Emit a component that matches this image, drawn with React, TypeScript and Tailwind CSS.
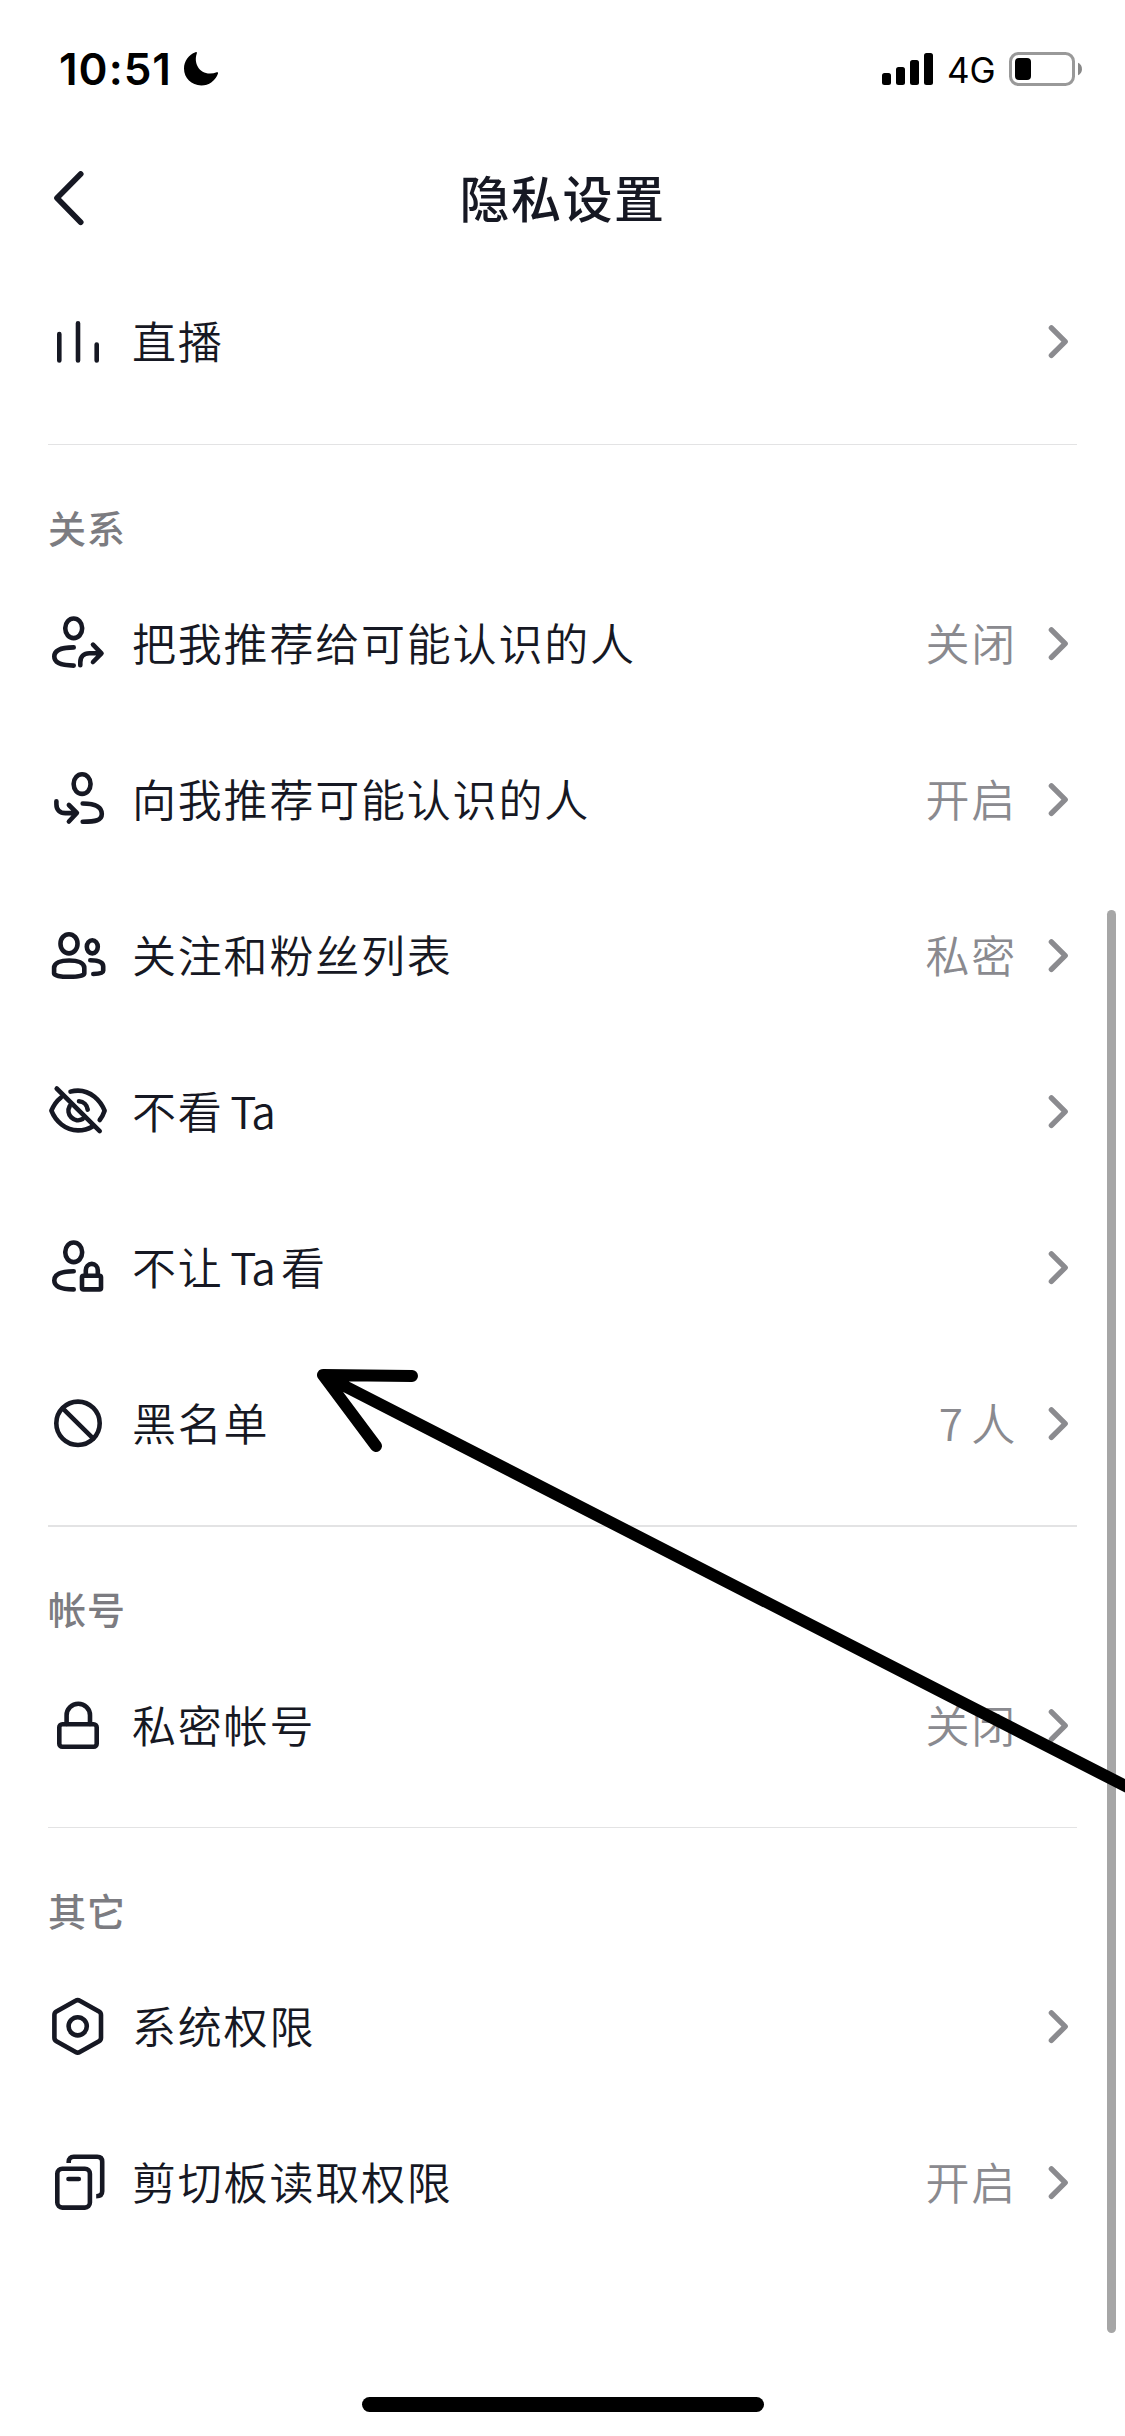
import type { ReactNode } from "react";

type Item = {
  label: ReactNode;
  icon: ReactNode;
  value?: string;
};

type Section = {
  title?: string;
  headClass?: string;
  lineClass?: string;
  items: Item[];
};

const icons = {
  live: <path d="M11.3 22v26.5M30 11.3v37.2M48.7 32.6v15.9" />,
  shareOut: (
    <>
      <rect x="17.3" y="4.5" width="16.8" height="19.6" rx="8.4" ry="9.3" />
      <path d="M25.7 33.4C14 33.4 6.3 36 6.3 42.6s7.7 9 19.4 9" />
      <path d="M32.3 51.3v-3c0-5.5 3.5-9 9-9H53M45 30.6l8.5 8.7-8.5 8.7" />
    </>
  ),
  shareIn: (
    <>
      <rect x="25.7" y="4.3" width="16.8" height="19.6" rx="8.4" ry="9.3" />
      <path d="M34.7 33.5C46.5 33.5 53.8 36.5 53.8 44c0 6.5-6 7.5-19.1 7.7" />
      <path d="M8.4 31.2v3c0 5.6 3.4 8.9 9 8.9h11M20.9 35l8 8-8 8.5" />
    </>
  ),
  people: (
    <>
      <rect x="12.5" y="8.2" width="17" height="19.2" rx="8.5" ry="9.3" />
      <path d="M6.1 42c0-5 6.4-7.5 15.1-7.5S36.3 37 36.3 42v5.5c0 2-5.8 3.3-15.1 3.3S6.1 49.5 6.1 47.5z" />
      <ellipse cx="44.3" cy="20.8" rx="5.5" ry="6.6" />
      <path d="M42.3 34.3c8 0 12.9 1.8 12.9 6.2v4.3c0 2.2-3 3.1-9.9 3.2" />
    </>
  ),
  eyeOff: (
    <>
      <path d="M22.5 9.6C25 8.9 27.4 8.6 30 8.6c12.6 0 22.5 9.6 26.6 20.1-1.1 3.3-2.6 6.4-4.9 9.3" />
      <path d="M13 15.5C8.6 19 5.5 23.6 3.4 28.7 7.5 39.2 17.4 48.4 30 48.4c5.6 0 10.4-1.5 14.6-4" />
      <path d="M21.7 24.2a9.5 9.5 0 0 0 12.9 12.9M31 19.3a9.5 9.5 0 0 1 8.7 8.3" />
      <path d="M8.7 6.5l43 42.6" />
    </>
  ),
  userLock: (
    <>
      <rect x="17.3" y="4.5" width="16.8" height="19.6" rx="8.4" ry="9.3" />
      <path d="M25.7 33.3C14 33.3 6.3 36 6.3 42.5s7.7 8.9 19.4 8.9" />
      <rect x="34" y="37.8" width="19" height="13.6" rx="1.5" />
      <path d="M37.8 37.5v-5.3a6 6.3 0 0 1 12 0v5.3" />
    </>
  ),
  ban: (
    <>
      <circle cx="30" cy="29.3" r="21.7" />
      <path d="M14.7 14.3l30.6 30.4" />
    </>
  ),
  lock: (
    <>
      <rect x="11.3" y="28.3" width="37.4" height="22.4" rx="3" />
      <path d="M18.6 28v-8.7a11.7 11.5 0 0 1 23.4 0V28" />
    </>
  ),
  hexagon: (
    <>
      <path d="M27.6 3.7a4 4 0 0 1 4.2 0l19.2 10.9a4 4 0 0 1 2 3.5v22.6a4 4 0 0 1-2 3.5L31.8 55a4 4 0 0 1-4.2 0L8.4 44.2a4 4 0 0 1-2-3.5V18.1a4 4 0 0 1 2-3.5z" />
      <circle cx="29.7" cy="29.3" r="9.1" />
    </>
  ),
  clipboard: (
    <>
      <rect x="9.3" y="15.7" width="32.6" height="38.9" rx="5" />
      <path d="M20.5 26h10.3" />
      <path strokeLinecap="butt" d="M20.7 9.9v-1.1c0-3.3 1.8-5 5-5h23.5c3.4 0 5 1.7 5 5v29.5c0 3.4-1.9 5-6 5" />
    </>
  ),
};

const Ta = () => <span className="tracking-[-1.5px]">Ta</span>;

const sections: Section[] = [
  { items: [{ label: "直播", icon: icons.live }] },
  {
    title: "关系",
    headClass: "h-[146px] pt-6",
    lineClass: "h-px",
    items: [
      { label: "把我推荐给可能认识的人", icon: icons.shareOut, value: "关闭" },
      { label: "向我推荐可能认识的人", icon: icons.shareIn, value: "开启" },
      { label: "关注和粉丝列表", icon: icons.people, value: "私密" },
      { label: <>不看 <Ta /></>, icon: icons.eyeOff },
      { label: <>不让 <Ta /> 看</>, icon: icons.userLock },
      { label: "黑名单", icon: icons.ban, value: "7 人" },
    ],
  },
  {
    title: "帐号",
    headClass: "h-[146px] pt-[23px]",
    lineClass: "h-[2px] -mb-px",
    items: [{ label: "私密帐号", icon: icons.lock, value: "关闭" }],
  },
  {
    title: "其它",
    headClass: "h-[145px] pt-[23px]",
    lineClass: "h-px",
    items: [
      { label: "系统权限", icon: icons.hexagon },
      { label: "剪切板读取权限", icon: icons.clipboard, value: "开启" },
    ],
  },
];

const StatusBar = () => (
  <div className="flex h-[138px] items-center justify-between pl-[59px] pr-[42px] font-['Inter',sans-serif] text-black">
    <div className="flex items-center">
      <span className="w-[124px] text-[44px] font-semibold leading-none tracking-[1px]">10:51</span>
      <svg width="36" height="36" viewBox="0 0 36 36" fill="currentColor">
        <path d="M12.5 1.2c1-.4 1.7.2 1.3 1.3C10.5 12 16 22.5 27 22.5c2.5 0 4.7-.4 6.700-1.200 1-.4 1.700.2 1.300 1.300A17.600 17.600 0 0 1 18.300 34.500C8.500 34.500 1 27.200 1 17.600 1 10 5.800 3.600 12.500 1.200z" />
      </svg>
    </div>
    <div className="flex items-center">
      <svg width="52" height="34" viewBox="0 0 52 34" fill="currentColor">
        <rect x="0" y="21" width="9" height="12" rx="2.5" />
        <rect x="14" y="15" width="9" height="18" rx="2.5" />
        <rect x="28" y="8" width="9" height="25" rx="2.5" />
        <rect x="42" y="1" width="9" height="32" rx="2.5" />
      </svg>
      <span className="ml-[13px] mt-[2px] w-[62px] text-[35px] leading-none">4G</span>
      <svg width="74" height="34" viewBox="0 0 74 34">
        <rect x="1.5" y="1.5" width="63" height="31" rx="8" fill="none" stroke="#999" strokeWidth="3" />
        <rect x="6" y="6" width="16" height="22" rx="4" fill="#000" />
        <path d="M69 10.7c5.3 1.8 5.3 10.8 0 12.6z" fill="#888" />
      </svg>
    </div>
  </div>
);

const Header = () => (
  <header className="flex h-[126px] items-center px-12 text-[#161823]">
    <button className="flex w-[60px]" aria-label="返回">
      <svg
        width="40"
        height="60"
        viewBox="0 0 40 60"
        fill="none"
        stroke="currentColor"
        strokeWidth="5.7"
        strokeLinecap="round"
        strokeLinejoin="round"
      >
        <path d="M32.7 3L9 27l23.7 24.3" />
      </svg>
    </button>
    <h1 className="flex-1 pb-[10px] text-center text-[50px] font-medium leading-none tracking-[1.5px]">
      隐私设置
    </h1>
    <div className="w-[60px]" />
  </header>
);

const Row = ({ label, icon, value }: Item) => (
  <li className="flex h-[156px] items-center text-[44px] leading-none tracking-[1.8px] [word-spacing:-5px]">
    <svg
      width="60"
      height="60"
      viewBox="0 0 60 60"
      className="shrink-0"
      fill="none"
      stroke="currentColor"
      strokeWidth="4.6"
      strokeLinecap="round"
      strokeLinejoin="round"
    >
      {icon}
    </svg>
    <span className="ml-6 flex-1 pb-[5px] font-[350]">{label}</span>
    {value && <span className="mr-[30px] pb-[5px] font-[350] text-[#8a8a8f]">{value}</span>}
    <svg
      width="30"
      height="40"
      viewBox="0 0 30 40"
      fill="none"
      stroke="#8b8b8f"
      strokeWidth="5.4"
      strokeLinecap="round"
      strokeLinejoin="round"
    >
      <path d="M4.4 5.8L18.2 19.6 4.4 33.4" />
    </svg>
  </li>
);

export default function App() {
  return (
    <div className="relative flex h-[2436px] w-[1125px] flex-col overflow-hidden bg-white font-['Noto_Sans_CJK_SC',sans-serif]">
      <StatusBar />
      <Header />

      <main className="px-12 text-[#161823]">
        {sections.map(({ title, headClass, lineClass, items }, i) => (
          <section key={i}>
            {title && (
              <div className={headClass}>
                <div className={`bg-[#e3e3e4] ${lineClass}`} />
                <h2 className="pt-[63px] text-[38px] font-medium leading-none tracking-[1px] text-[#7c7c81]">
                  {title}
                </h2>
              </div>
            )}
            <ul>
              {items.map((item, j) => (
                <Row key={j} {...item} />
              ))}
            </ul>
          </section>
        ))}
      </main>

      {/* Home indicator */}
      <div className="mx-auto mb-6 mt-auto h-[15px] w-[402px] rounded-full bg-black" />

      {/* Scrollbar */}
      <div className="absolute right-[9px] top-[910px] h-[1423px] w-[9px] rounded-full bg-[#a6a6a6]" />

      {/* Hand-drawn arrow */}
      <svg
        className="pointer-events-none absolute left-0 top-0"
        width="1125"
        height="2436"
        viewBox="0 0 1125 2436"
        fill="none"
        stroke="#000"
        strokeWidth="12"
        strokeLinecap="round"
        strokeLinejoin="round"
      >
        <path d="M412 1376l-89-1 53 71M323 1375l817 418.5" />
      </svg>
    </div>
  );
}
